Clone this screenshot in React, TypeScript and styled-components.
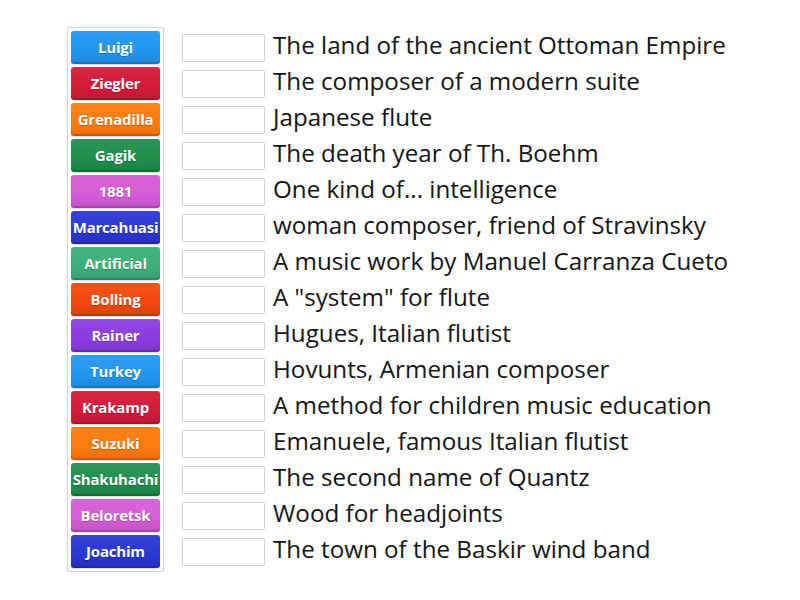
import styled, { createGlobalStyle } from 'styled-components'

const GlobalStl = createGlobalStyle`
  html, body {
    margin: 0;
    padding: 0;
    background: #fff;
    font-family: 'Open Sans', 'Liberation Sans', sans-serif;
  }
`

const tiles = [
  { label: 'Luigi', color: '#2196f0' },
  { label: 'Ziegler', color: '#d41a3a' },
  { label: 'Grenadilla', color: '#ff7b0c' },
  { label: 'Gagik', color: '#1f8f4c' },
  { label: '1881', color: '#d65cd8' },
  { label: 'Marcahuasi', color: '#2a36d4' },
  { label: 'Artificial', color: '#3bb07a' },
  { label: 'Bolling', color: '#f2480c' },
  { label: 'Rainer', color: '#8b3ce0' },
  { label: 'Turkey', color: '#2196f0' },
  { label: 'Krakamp', color: '#d41a3a' },
  { label: 'Suzuki', color: '#ff7b0c' },
  { label: 'Shakuhachi', color: '#1f8f4c' },
  { label: 'Beloretsk', color: '#d65cd8' },
  { label: 'Joachim', color: '#2a36d4' },
]

const clues = [
  'The land of the ancient Ottoman Empire',
  'The composer of a modern suite',
  'Japanese flute',
  'The death year of Th. Boehm',
  'One kind of... intelligence',
  'woman composer, friend of Stravinsky',
  'A music work by Manuel Carranza Cueto',
  'A "system" for flute',
  'Hugues, Italian flutist',
  'Hovunts, Armenian composer',
  'A method for children music education',
  'Emanuele, famous Italian flutist',
  'The second name of Quantz',
  'Wood for headjoints',
  'The town of the Baskir wind band',
]

const BoardStl = styled.div`
  display: flex;
  align-items: flex-start;
  padding: 27px 0 0 67px;
`

const TrayStl = styled.div`
  display: flex;
  flex-direction: column;
  gap: 3px;
  padding: 3px;
  border: 1px solid #d4d4d4;
  border-radius: 2px;
  box-shadow: 0 1px 2px rgba(0,0,0,.12);
  background: #fff;
`

const TileStl = styled.div<{ $color: string }>`
  width: 89px;
  height: 33px;
  box-sizing: border-box;
  display: flex;
  align-items: center;
  justify-content: center;
  border-radius: 3px;
  background: linear-gradient(to bottom, rgba(255,255,255,.06) 0%, rgba(0,0,0,0) 60%, rgba(0,0,0,.1) 100%), ${({ $color }) => $color};
  box-shadow: inset 0 -2px 0 rgba(0,0,0,.16), 0 1px 1px rgba(0,0,0,.15);
  color: #fff;
  font-weight: 700;
  font-size: 15px;
  letter-spacing: -0.2px;
  padding-bottom: 1px;
  text-shadow: 0 1px 1px rgba(0,0,0,.25);
  white-space: nowrap;
`

const ListStl = styled.div`
  display: flex;
  flex-direction: column;
  margin: 3px 0 0 18px;
`

const RowStl = styled.div`
  height: 36px;
  display: flex;
  align-items: center;
  gap: 8px;
`

const SlotStl = styled.div`
  width: 83px;
  height: 28px;
  box-sizing: border-box;
  border: 1px solid #d0d0d0;
  border-radius: 2px;
  background: #fff;
  box-shadow: 0 0 1px rgba(0,0,0,.08);
  flex: 0 0 auto;
`

const ClueStl = styled.span`
  font-size: 24.2px;
  color: #141414;
  white-space: nowrap;
  line-height: 1;
  margin-top: -5px;
`

export default function App() {
  return (
    <>
      <GlobalStl />
      <BoardStl>
        <TrayStl>
          {tiles.map(t => (
            <TileStl key={t.label} $color={t.color}>{t.label}</TileStl>
          ))}
        </TrayStl>
        <ListStl>
          {clues.map(c => (
            <RowStl key={c}>
              <SlotStl />
              <ClueStl>{c}</ClueStl>
            </RowStl>
          ))}
        </ListStl>
      </BoardStl>
    </>
  )
}
